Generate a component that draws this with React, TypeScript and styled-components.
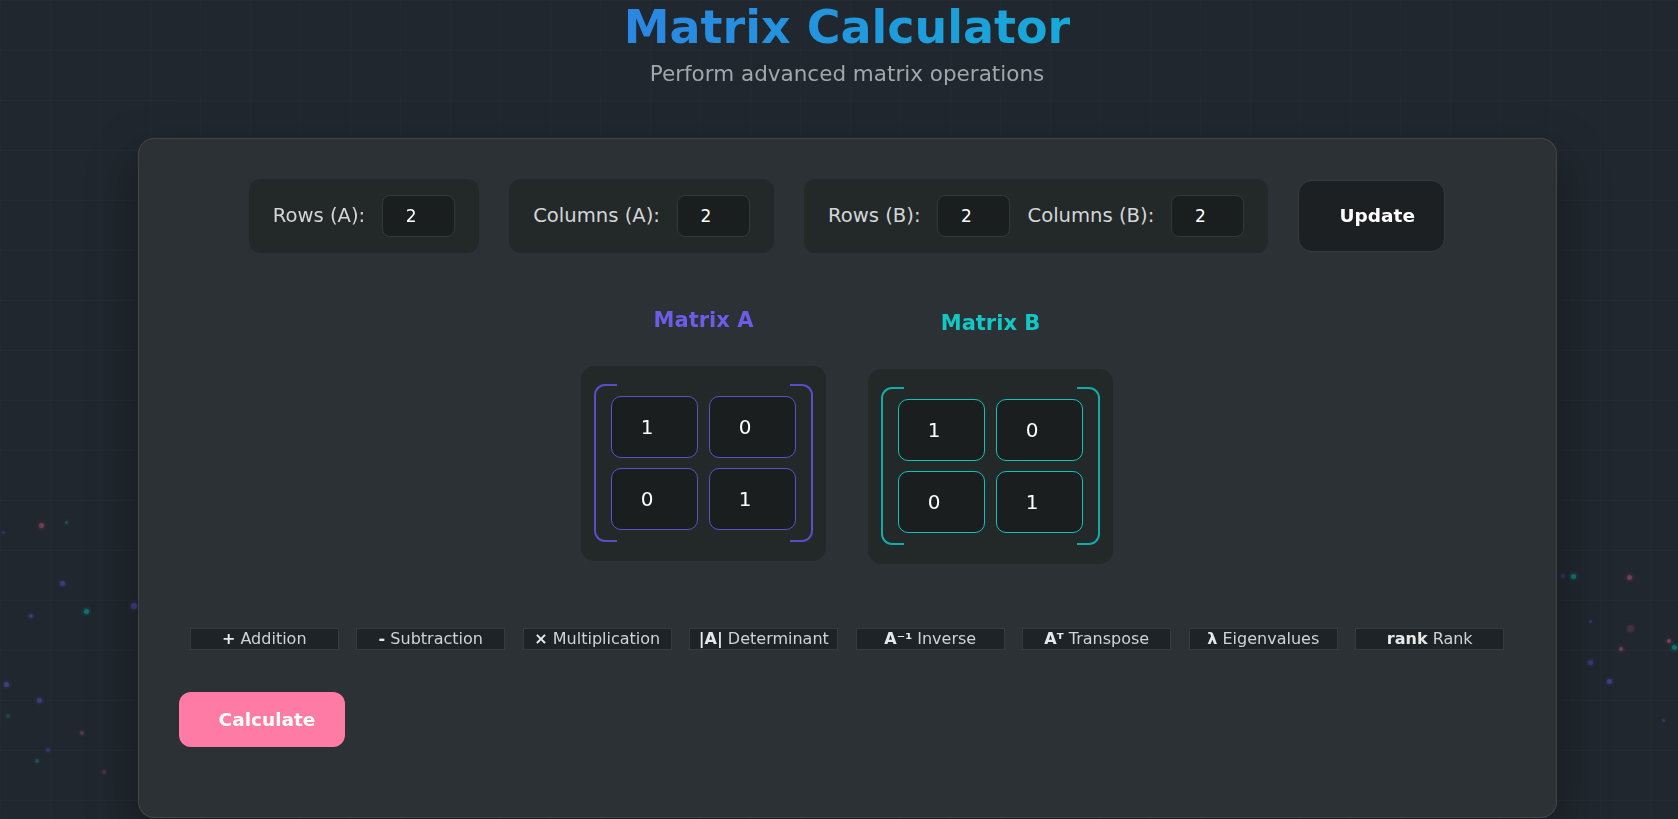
import React from "react";
import styled, { createGlobalStyle } from "styled-components";

const GlobalStyle = createGlobalStyle`
  html, body {
    margin: 0;
    padding: 0;
  }
  body {
    min-height: 819px;
    overflow: hidden;
    background-color: #20272e;
    background-image:
      linear-gradient(rgba(255, 255, 255, 0.017) 1px, transparent 1px),
      linear-gradient(90deg, rgba(255, 255, 255, 0.017) 1px, transparent 1px);
    background-size: 50px 50px;
    font-family: "DejaVu Sans", Verdana, sans-serif;
  }
`;

/** floating dots behind the card */
const dots = [
  { x: 41, y: 525, s: 5, c: "255,107,157", o: 0.35 },
  { x: 66, y: 522, s: 3, c: "0,206,201", o: 0.3 },
  { x: 62, y: 583, s: 5, c: "108,92,231", o: 0.4 },
  { x: 86, y: 611, s: 5, c: "0,206,201", o: 0.45 },
  { x: 31, y: 616, s: 4, c: "108,92,231", o: 0.4 },
  { x: 134, y: 606, s: 6, c: "108,92,231", o: 0.45 },
  { x: 6, y: 684, s: 5, c: "108,92,231", o: 0.45 },
  { x: 39, y: 700, s: 5, c: "108,92,231", o: 0.4 },
  { x: 82, y: 733, s: 4, c: "255,107,157", o: 0.25 },
  { x: 48, y: 750, s: 4, c: "108,92,231", o: 0.3 },
  { x: 37, y: 761, s: 4, c: "0,206,201", o: 0.25 },
  { x: 104, y: 772, s: 4, c: "255,107,157", o: 0.2 },
  { x: 8, y: 716, s: 4, c: "0,206,201", o: 0.2 },
  { x: 3, y: 532, s: 3, c: "108,92,231", o: 0.25 },
  { x: 1573, y: 576, s: 5, c: "0,206,201", o: 0.45 },
  { x: 1563, y: 576, s: 4, c: "108,92,231", o: 0.25 },
  { x: 1629, y: 577, s: 5, c: "255,107,157", o: 0.35 },
  { x: 1630, y: 628, s: 7, c: "255,107,157", o: 0.15 },
  { x: 1669, y: 641, s: 4, c: "255,107,157", o: 0.4 },
  { x: 1674, y: 647, s: 5, c: "0,206,201", o: 0.45 },
  { x: 1621, y: 649, s: 4, c: "255,107,157", o: 0.35 },
  { x: 1590, y: 662, s: 5, c: "108,92,231", o: 0.35 },
  { x: 1609, y: 681, s: 5, c: "108,92,231", o: 0.45 },
  { x: 1590, y: 621, s: 3, c: "108,92,231", o: 0.3 },
  { x: 1663, y: 720, s: 3, c: "108,92,231", o: 0.3 },
];

const matrixA = [
  [1, 0],
  [0, 1],
];
const matrixB = [
  [1, 0],
  [0, 1],
];

const operations = [
  { sym: "+", name: "Addition" },
  { sym: "-", name: "Subtraction" },
  { sym: "×", name: "Multiplication" },
  { sym: "|A|", name: "Determinant" },
  { sym: "A⁻¹", name: "Inverse" },
  { sym: "Aᵀ", name: "Transpose" },
  { sym: "λ", name: "Eigenvalues" },
  { sym: "rank", name: "Rank" },
];

const App = () => {
  return (
    <>
      <GlobalStyle />
      <Particles>
        {dots.map((d, i) => (
          <Dot key={i} $x={d.x} $y={d.y} $size={d.s} $color={`rgba(${d.c},${d.o})`} />
        ))}
      </Particles>
      <Page>
        <Title>Matrix Calculator</Title>
        <Subtitle>Perform advanced matrix operations</Subtitle>

        <Card>
          <Controls>
            <Group>
              <Label>Rows (A):</Label>
              <DimInput type="number" defaultValue={2} />
            </Group>
            <Group>
              <Label>Columns (A):</Label>
              <DimInput type="number" defaultValue={2} />
            </Group>
            <Group>
              <Label>Rows (B):</Label>
              <DimInput type="number" defaultValue={2} />
              <Label>Columns (B):</Label>
              <DimInput type="number" defaultValue={2} />
            </Group>
            <UpdateButton>Update</UpdateButton>
          </Controls>

          <MatrixSection>
            <MatrixColumn>
              <MatrixTitle $color="#6c5ce7">Matrix A</MatrixTitle>
              <MatrixBox>
                <Bracketed $color="#5b4dc4">
                  <CellGrid>
                    {matrixA.flat().map((v, i) => (
                      <Cell key={i} type="number" defaultValue={v} $color="#5d50cc" />
                    ))}
                  </CellGrid>
                </Bracketed>
              </MatrixBox>
            </MatrixColumn>
            <MatrixColumn $shift={3}>
              <MatrixTitle $color="#13c8c4">Matrix B</MatrixTitle>
              <MatrixBox>
                <Bracketed $color="#14aaa6">
                  <CellGrid>
                    {matrixB.flat().map((v, i) => (
                      <Cell key={i} type="number" defaultValue={v} $color="#10c2bf" />
                    ))}
                  </CellGrid>
                </Bracketed>
              </MatrixBox>
            </MatrixColumn>
          </MatrixSection>

          <OpsRow>
            {operations.map((op) => (
              <OpButton key={op.name}>
                <b>{op.sym}</b> {op.name}
              </OpButton>
            ))}
          </OpsRow>

          <CalcButton>Calculate</CalcButton>
        </Card>
      </Page>
    </>
  );
};

export default App;

const Particles = styled.div`
  position: fixed;
  inset: 0;
  pointer-events: none;
  z-index: 0;
`;

const Dot = styled.span<{ $x: number; $y: number; $size: number; $color: string }>`
  position: absolute;
  left: ${(p) => p.$x - p.$size / 2}px;
  top: ${(p) => p.$y - p.$size / 2}px;
  width: ${(p) => p.$size}px;
  height: ${(p) => p.$size}px;
  border-radius: 50%;
  background: ${(p) => p.$color};
  box-shadow: 0 0 4px ${(p) => p.$color};
`;

const Page = styled.div`
  position: relative;
  z-index: 1;
  width: 100vw;
  margin-left: 8px;
  display: flex;
  flex-direction: column;
  align-items: center;
`;

const Title = styled.h1`
  display: inline-block;
  margin: 0;
  font-size: 46px;
  font-weight: bold;
  line-height: normal;
  background: linear-gradient(90deg, #2b86e2, #17a9d8);
  -webkit-background-clip: text;
  background-clip: text;
  color: transparent;
`;

const Subtitle = styled.p`
  margin: 7px 0 0;
  font-size: 21.5px;
  line-height: 1.2;
  color: #a1a7ac;
`;

const Card = styled.div`
  width: 1419px;
  box-sizing: border-box;
  margin-top: 51px;
  padding: 40px 40px 70px;
  background: #2b3134;
  border: 1px solid rgba(255, 255, 255, 0.1);
  border-radius: 16px;
  box-shadow: 0 20px 50px rgba(0, 0, 0, 0.35);
`;

const Controls = styled.div`
  display: flex;
  justify-content: center;
  align-items: center;
  gap: 30px;
`;

const Group = styled.div`
  display: flex;
  align-items: center;
  gap: 17px;
  padding: 16px 24px;
  background: #232829;
  border-radius: 12px;
`;

const Label = styled.label`
  font-size: 19.6px;
  color: #d3d6d8;
`;

const DimInput = styled.input`
  width: 73px;
  height: 42px;
  box-sizing: border-box;
  padding: 0;
  background: #1b1e1f;
  border: 1px solid #33383a;
  border-radius: 8px;
  color: #fff;
  font-family: inherit;
  font-size: 17px;
  text-align: center;
  outline: none;
`;

const UpdateButton = styled.button`
  width: 147px;
  height: 72px;
  padding: 0 0 0 11px;
  background: #1c2022;
  border: 1px solid #363b3e;
  border-radius: 14px;
  color: #fff;
  font-family: inherit;
  font-size: 18.5px;
  font-weight: bold;
  cursor: pointer;
`;

const MatrixSection = styled.div`
  display: flex;
  justify-content: center;
  align-items: flex-start;
  gap: 42px;
  margin-top: 55px;
`;

const MatrixColumn = styled.div<{ $shift?: number }>`
  display: flex;
  flex-direction: column;
  align-items: center;
  margin-top: ${(p) => p.$shift || 0}px;
`;

const MatrixTitle = styled.h3<{ $color: string }>`
  margin: 0 0 33px;
  font-size: 21px;
  font-weight: bold;
  line-height: 1.2;
  color: ${(p) => p.$color};
`;

const MatrixBox = styled.div`
  width: 245px;
  box-sizing: border-box;
  padding: 18px 13px 19px;
  background: #232829;
  border-radius: 14px;
`;

const Bracketed = styled.div<{ $color: string }>`
  position: relative;
  padding: 12px 17px;
  &::before,
  &::after {
    content: "";
    position: absolute;
    top: 0;
    bottom: 0;
    width: 23px;
    box-sizing: border-box;
    border: 2px solid ${(p) => p.$color};
  }
  &::before {
    left: 0;
    border-right: none;
    border-radius: 11px 0 0 11px;
  }
  &::after {
    right: 0;
    border-left: none;
    border-radius: 0 11px 11px 0;
  }
`;

const CellGrid = styled.div`
  display: grid;
  grid-template-columns: repeat(2, 87px);
  gap: 10px 11px;
`;

const Cell = styled.input<{ $color: string }>`
  position: relative;
  z-index: 1;
  width: 87px;
  height: 62px;
  box-sizing: border-box;
  padding: 0;
  background: #1b1e1f;
  border: 1px solid ${(p) => p.$color};
  border-radius: 10px;
  color: #fff;
  font-family: inherit;
  font-size: 20px;
  text-align: center;
  outline: none;
`;

const OpsRow = styled.div`
  display: flex;
  justify-content: center;
  gap: 17.5px;
  margin-top: 64px;
`;

const OpButton = styled.button`
  width: 149px;
  height: 22px;
  box-sizing: border-box;
  padding: 0;
  background: #1e2325;
  border: 1px solid #363c3e;
  color: #cfd3d5;
  font-family: inherit;
  font-size: 16px;
  line-height: 20px;
  white-space: nowrap;
  cursor: pointer;
  b {
    color: #e6e8e9;
  }
`;

const CalcButton = styled.button`
  display: block;
  margin-top: 42px;
  width: 166px;
  height: 55px;
  padding: 0 0 0 11px;
  background: #fd7ba4;
  border: none;
  border-radius: 12px;
  color: #fff;
  font-family: inherit;
  font-size: 18.5px;
  font-weight: bold;
  cursor: pointer;
`;
